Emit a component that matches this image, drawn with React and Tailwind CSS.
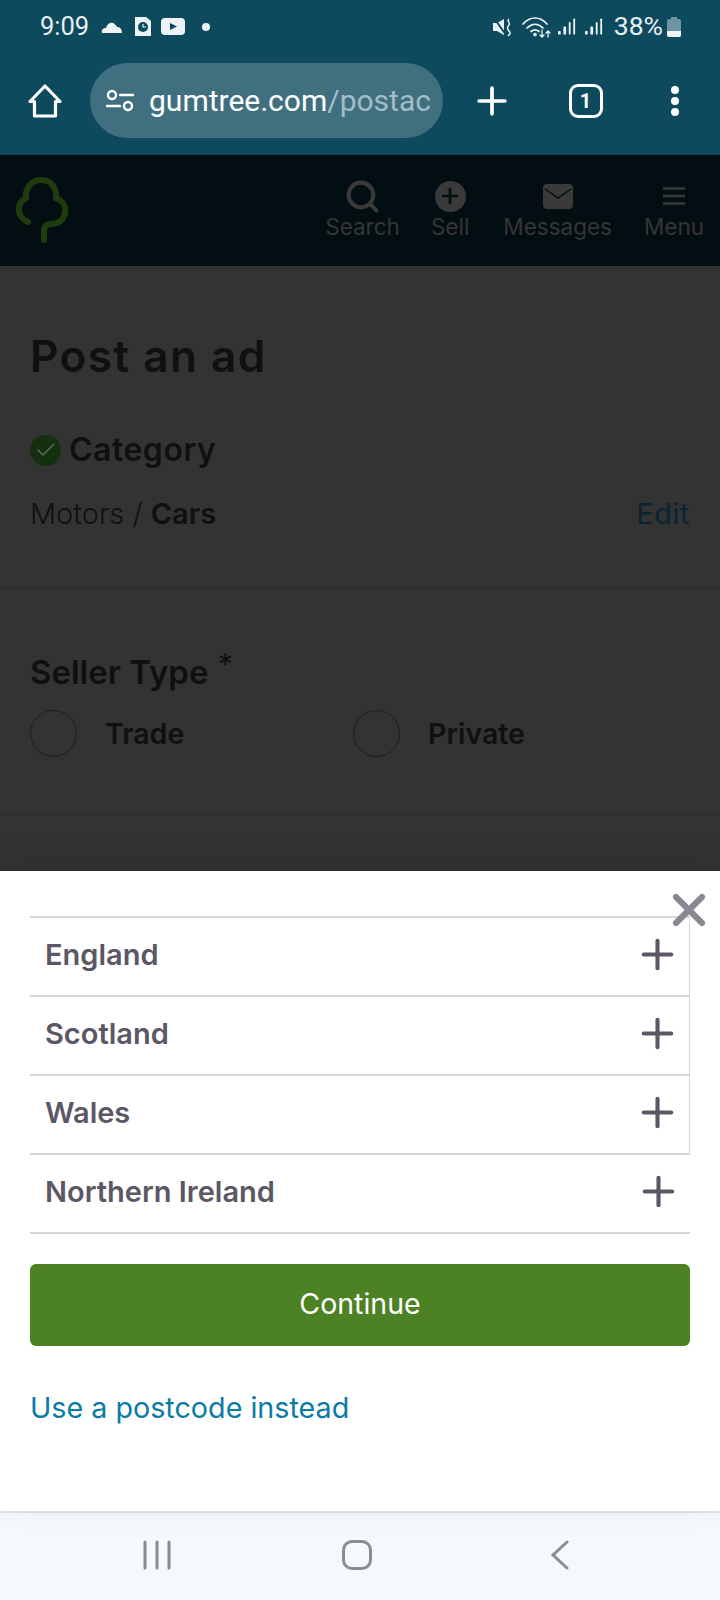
import { Plus, Search, X, Check } from 'lucide-react';

const font = "font-['Inter','Liberation_Sans',sans-serif]";

function SignalIcon({ className }) {
  return (
    <svg className={className} width="18" height="19" viewBox="0 0 20 20" fill="#eef3f5">
      <rect x="0" y="15" width="3" height="4" rx="1" />
      <rect x="6" y="10" width="3" height="9" rx="1" />
      <rect x="12" y="5" width="2" height="14" rx="1" />
      <rect x="17" y="1" width="2" height="18" rx="1" />
    </svg>
  );
}

function StatusBar() {
  return (
    <div className="h-[51px] pl-[40px] pr-[39px] pt-[2px] flex items-center justify-between text-[#e8f0f3]">
      <div className="flex items-center">
        <span className="font-['Roboto',sans-serif] text-[25.5px] leading-none w-[60px]">9:09</span>
        <svg className="ml-[1px]" width="22" height="14" viewBox="0 0 22 14"><path d="M1 13c-1-3 1-5 4-5 1-4 4-6 7-5 2 1 3 2 4 4 3 0 5 2 5 6z" fill="#eef3f5" /></svg>
        <svg className="ml-[12px]" width="16" height="19" viewBox="0 0 16 19"><path d="M0 0h11l5 4v15H0z" fill="#eef3f5" /><circle cx="8" cy="10" r="5" fill="#0e4a5e" /><path d="M8 7v3h3" stroke="#eef3f5" strokeWidth="1.2" fill="none" /></svg>
        <svg className="ml-[10px]" width="24" height="17" viewBox="0 0 24 17"><rect width="24" height="17" rx="4" fill="#eef3f5" /><path d="M9 5l7 3.500-7 3.500z" fill="#0e4a5e" /></svg>
        <span className="ml-[17px] w-[8px] h-[8px] rounded-full bg-[#eef3f5]" />
      </div>
      <div className="flex items-center">
        <svg width="20" height="20" viewBox="0 0 20 20"><path d="M0 6h4l7-4v16l-7-4H0z" fill="#eef3f5" /><path d="M1 1l12 17" stroke="#0e4a5e" strokeWidth="2" /><path d="M16 2c-3 2 2 4 0 6s-2 4 0 6 1 3-1 5" stroke="#eef3f5" strokeWidth="1.500" fill="none" /></svg>
        <svg className="ml-[9px]" width="30" height="22" viewBox="0 0 30 22" fill="none" stroke="#eef3f5" strokeWidth="1.700" strokeLinecap="round"><path d="M1 8c7-8 17-8 24 0" /><path d="M5 12c5-5 11-5 16 0" /><path d="M9 15.500c3-2.500 5-2.500 8 0" /><circle cx="13" cy="18.500" r="1" fill="#eef3f5" /><path d="M20 14v7M18 19l2 2 2-2M26 21v-6M24 17l2-2 2 2" strokeWidth="1.300" /></svg>
        <SignalIcon className="ml-[6px]" />
        <SignalIcon className="ml-[9px]" />
        <span className="ml-[11px] font-['Roboto',sans-serif] text-[26.5px] leading-none">38%</span>
        <svg className="ml-[4px]" width="14" height="20" viewBox="0 0 14 20"><path d="M4 0h6v2h2a2 2 0 0 1 2 2v14a2 2 0 0 1-2 2H2a2 2 0 0 1-2-2V4a2 2 0 0 1 2-2h2z" fill="#6f94a1" /><path d="M0 14h14v4a2 2 0 0 1-2 2H2a2 2 0 0 1-2-2z" fill="#eef3f5" /></svg>
      </div>
    </div>
  );
}

function BrowserBar() {
  return (
    <div className="h-[104px] flex items-start pt-[12px]">
      <div className="w-[90px] h-[75px] flex items-center justify-center">
        <svg width="36" height="36" viewBox="0 0 36 36" fill="none" stroke="#fff" strokeWidth="3.200" strokeLinecap="round" strokeLinejoin="round">
          <path d="M18 3L3 18.500h4.500V33h21V18.500H33z" />
        </svg>
      </div>
      <div className="w-[353px] h-[75px] rounded-full bg-[#40707f] flex items-center overflow-hidden pl-[15px]">
        <svg className="shrink-0" width="30" height="24" viewBox="0 0 30 24" fill="none" stroke="#fff" strokeWidth="2.400" strokeLinecap="round"><circle cx="7" cy="6" r="4" /><path d="M15 6h13" /><path d="M2 17h13" /><circle cx="23" cy="17" r="4" /></svg>
        <span className="ml-[14px] font-['Roboto',sans-serif] text-[30px] leading-none whitespace-nowrap text-white">gumtree.com<span className="text-[#a3bdc6]">/postac</span></span>
      </div>
      <div className="w-[98px] h-[75px] flex items-center justify-center">
        <Plus size={44} strokeWidth={2} color="#fff" />
      </div>
      <div className="w-[89px] h-[75px] flex items-center justify-center">
        <div className="w-[34px] h-[34px] rounded-[9px] border-[3px] border-white flex items-center justify-center font-['Roboto',sans-serif] text-[20px] font-bold text-white">1</div>
      </div>
      <div className="flex-1 h-[75px] flex flex-col items-center justify-center gap-[3px]">
        <span className="w-[8px] h-[8px] rounded-full bg-white" />
        <span className="w-[8px] h-[8px] rounded-full bg-white" />
        <span className="w-[8px] h-[8px] rounded-full bg-white" />
      </div>
    </div>
  );
}

function NavItem({ label, icon, className }) {
  return (
    <div className={`flex flex-col items-center pt-[3px] ${className}`}>
      <div className="h-[34px] flex items-center justify-center">{icon}</div>
      <span className="text-[22.5px] leading-[28px] text-[#353535]">{label}</span>
    </div>
  );
}

function SiteHeader() {
  return (
    <div className="h-[111px] bg-[#030e12] flex pl-[15px] pr-[16px] pt-[21px]">
      <svg width="54" height="68" viewBox="0 0 54 68" fill="none" stroke="#1f3c0f" strokeWidth="6" strokeLinecap="round" className="shrink-0 -mt-[1px]">
        <path d="M13 47C6 44 3 38 4 32c1-4 3-7 7-9-1-9 5-18 15-18s16 8 15 18c7 3 10 9 9 15-1 6-6 11-14 11-6 0-7 4-7 8v8" />
      </svg>
      <div className="ml-auto flex">
        <NavItem label="Search" className="mr-[31px]" icon={<Search size={37} strokeWidth={2.6} color="#3a3a3a" />} />
        <NavItem label="Sell" className="mr-[34px]" icon={
          <div className="w-[31px] h-[31px] rounded-full bg-[#3a3a3a] flex items-center justify-center"><Plus size={24} strokeWidth={2.6} color="#030e12" /></div>
        } />
        <NavItem label="Messages" className="mr-[32px]" icon={
          <svg width="30" height="25" viewBox="0 0 30 25"><rect width="30" height="25" rx="4" fill="#3a3a3a" /><path d="M2 5l13 9 13-9" stroke="#030e12" strokeWidth="1.500" fill="none" /></svg>
        } />
        <NavItem label="Menu" icon={
          <svg width="24" height="20" viewBox="0 0 24 20" stroke="#3a3a3a" strokeWidth="2.500"><path d="M1 2.500h22M1 10h22M1 17.500h22" /></svg>
        } />
      </div>
    </div>
  );
}

function RegionRow({ name, last }) {
  return (
    <div className={`h-[79px] border-t-2 border-[#d6d6d6] flex items-center justify-between pl-[15px] pb-[4px] pr-[8px] ${last ? '' : 'border-r'}`}>
      <span className="text-[29px] font-semibold text-[#5d5665]">{name}</span>
      <Plus size={47} strokeWidth={2.1} color="#5d5665" />
    </div>
  );
}

export default function App() {
  return (
    <div className={`w-[720px] h-[1600px] flex flex-col overflow-hidden ${font}`}>
      <div className="bg-[#0e4a5e]">
        <StatusBar />
        <BrowserBar />
      </div>
      <SiteHeader />

      <div className="h-[605px] bg-[#333333] text-[#100f12]">
        <div className="px-[30px] pt-[62px] h-[323px] border-b border-[#2b2b2b]">
          <h1 className="text-[44px] leading-[56px] font-semibold tracking-[1.500px]">Post an ad</h1>
          <div className="mt-[46px] flex items-center">
            <span className="w-[31px] h-[31px] rounded-full bg-[#15300f] flex items-center justify-center">
              <Check size={24} strokeWidth={1.500} color="#55705a" />
            </span>
            <span className="ml-[8px] text-[32px] leading-[40px] font-semibold tracking-[0.5px]">Category</span>
          </div>
          <div className="mt-[26px] flex justify-between text-[29px] leading-[36px]">
            <span className="font-light">Motors / <span className="font-semibold">Cars</span></span>
            <span className="text-[#0a2433] tracking-[0.5px]">Edit</span>
          </div>
        </div>
        <div className="px-[30px] pt-[63px] h-[226px] border-b border-[#2b2b2b]">
          <div className="text-[33px] leading-[40px] font-semibold">Seller Type <sup className="ml-[1px] top-[-9px] text-[30px] font-normal">*</sup></div>
          <div className="mt-[18px] flex items-center">
            <div className="w-[323px] flex items-center">
              <span className="w-[47px] h-[47px] rounded-full border border-[#1f1f1f]" />
              <span className="ml-[28px] pt-[2px] text-[28.5px] font-semibold">Trade</span>
            </div>
            <span className="w-[47px] h-[47px] rounded-full border border-[#1f1f1f]" />
            <span className="ml-[28px] pt-[2px] text-[28.5px] font-semibold">Private</span>
          </div>
        </div>
      </div>

      <div className="relative flex-1 bg-white px-[30px] pt-[45px] shadow-[0_-8px_30px_rgba(0,0,0,0.1)]">
        <X className="absolute right-[5px] top-[13px]" size={52} strokeWidth={2.8} color="#8b8690" />
        <RegionRow name="England" />
        <RegionRow name="Scotland" />
        <RegionRow name="Wales" />
        <RegionRow name="Northern Ireland" last />
        <div className="border-t-2 border-[#d6d6d6]" />
        <button className="mt-[30px] w-full h-[82px] rounded-[6px] bg-[#4d8224] text-white text-[28.5px] pb-[2px]">Continue</button>
        <div className="mt-[44px] text-[28.7px] leading-[36px] text-[#0a7ba5]">Use a postcode instead</div>
      </div>

      <div className="h-[89px] shrink-0 bg-[#f4f9fd] border-t-2 border-[#dfe5ea] flex items-center pb-[4px]">
        <svg className="ml-[142px]" width="30" height="30" viewBox="0 0 30 30" fill="none" stroke="#8a8d90" strokeWidth="3" strokeLinecap="round"><path d="M3 2v26M15 2v26M27 2v26" /></svg>
        <div className="ml-[170px] w-[30px] h-[30px] rounded-[10px] border-[3px] border-[#8a8d90]" />
        <svg className="ml-[178px]" width="20" height="30" viewBox="0 0 20 30" fill="none" stroke="#8a8d90" strokeWidth="3" strokeLinecap="round"><path d="M17 2L3 15l14 13" /></svg>
      </div>
    </div>
  );
}
